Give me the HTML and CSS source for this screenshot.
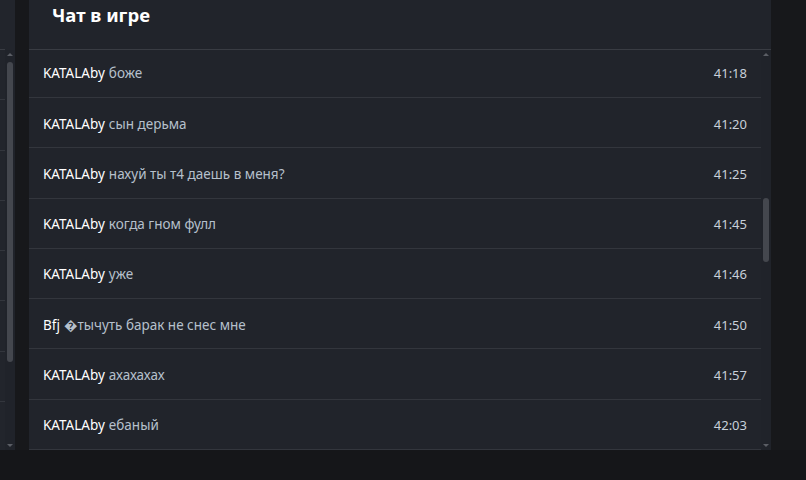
FILE: index.html
```html
<!DOCTYPE html>
<html lang="ru">
<head>
    <meta charset="UTF-8">
    <meta name="viewport" content="width=device-width, initial-scale=1.0">
    <title>Чат в игре</title>
    <link rel="stylesheet" href="styles.css">
</head>
<body>
    <div id="stage">
        <div id="side-panel">
            <div class="side-list">
                <div class="side-head"></div>
                <div class="side-row"></div>
                <div class="side-row"></div>
                <div class="side-row"></div>
                <div class="side-row"></div>
                <div class="side-row"></div>
                <div class="side-row"></div>
                <div class="side-row"></div>
                <div class="side-row"></div>
            </div>
            <div class="scrollbar side-scroll">
                <span class="arrow up"></span>
                <span class="thumb"></span>
                <span class="arrow down"></span>
            </div>
        </div>

        <div id="chat-modal">
            <div id="chat-header">
                <h2>Чат в игре</h2>
            </div>
            <div id="chat-body">
                <div id="chat-list">
                    <div class="msg"><span class="who">KATALAby</span><span class="text">боже</span><span class="time">41:18</span></div>
                    <div class="msg"><span class="who">KATALAby</span><span class="text">сын дерьма</span><span class="time">41:20</span></div>
                    <div class="msg"><span class="who">KATALAby</span><span class="text">нахуй ты т4 даешь в меня?</span><span class="time">41:25</span></div>
                    <div class="msg"><span class="who">KATALAby</span><span class="text">когда гном фулл</span><span class="time">41:45</span></div>
                    <div class="msg"><span class="who">KATALAby</span><span class="text">уже</span><span class="time">41:46</span></div>
                    <div class="msg"><span class="who">Bfj</span><span class="text">&#xFFFD;тычуть барак не снес мне</span><span class="time">41:50</span></div>
                    <div class="msg"><span class="who">KATALAby</span><span class="text">ахахахах</span><span class="time">41:57</span></div>
                    <div class="msg"><span class="who">KATALAby</span><span class="text">ебаный</span><span class="time">42:03</span></div>
                </div>
                <div class="scrollbar chat-scroll">
                    <span class="arrow up"></span>
                    <span class="thumb"></span>
                    <span class="arrow down"></span>
                </div>
            </div>
        </div>
    </div>
</body>
</html>
```
FILE: styles.css
```css
body {
    margin: 0;
    width: 806px;
    height: 480px;
    overflow: hidden;
    background: #151619;
    font-family: "Noto Sans", "Open Sans", Arial, sans-serif;
    color: #fff;
}

#stage {
    display: flex;
    height: 450px;
    gap: 14px;
    background: #17181b;
}

/* panel peeking out on the left */
#side-panel {
    display: flex;
    width: 15px;
    background: #22252c;
}

.side-list {
    width: 5px;
    overflow: hidden;
}

.side-head {
    height: 49px;
    border-bottom: 1px solid #393c43;
    width: 15px;
}

.side-row {
    height: 49.25px;
    border-bottom: 1px solid #33363d;
}

.side-row:first-of-type {
    height: 50px;
}

.side-scroll {
    width: 10px;
    margin-top: 50px;
}

/* chat modal */
#chat-modal {
    width: 742px;
    display: flex;
    flex-direction: column;
    background: #21242b;
}

#chat-header {
    height: 49px;
    border-bottom: 1px solid #393c43;
    padding-left: 23px;
}

#chat-header h2 {
    margin: 0;
    padding-top: 2px;
    font-size: 18.5px;
    font-weight: 700;
    line-height: 26px;
    color: #fff;
}

#chat-body {
    display: flex;
    flex: 1;
    overflow: hidden;
}

#chat-list {
    flex: 1;
    overflow: hidden;
}

.msg {
    display: flex;
    align-items: center;
    box-sizing: border-box;
    height: 50.25px;
    padding: 2px 14px 0;
    border-bottom: 1px solid #33363d;
    font-size: 13.5px;
}

.msg:first-child {
    margin-top: -2.25px;
}

.who {
    color: #fff;
    margin-right: 4px;
}

.text {
    flex: 1;
    color: #b6c0cc;
}

.time {
    color: #c8d0da;
    font-size: 13px;
}

/* scrollbars */
.scrollbar {
    position: relative;
    background: #20232a;
}

.chat-scroll {
    width: 10px;
}

.arrow {
    position: absolute;
    left: 2px;
    width: 0;
    height: 0;
    border-left: 3px solid transparent;
    border-right: 3px solid transparent;
}

.arrow.up {
    top: 3px;
    border-bottom: 3px solid #5b5e65;
}

.arrow.down {
    bottom: 3px;
    border-top: 3px solid #5b5e65;
}

.thumb {
    position: absolute;
    left: 2px;
    width: 6px;
    border-radius: 3px;
    background: #44474e;
}

.chat-scroll .thumb {
    top: 148px;
    height: 64px;
}

.side-scroll .thumb {
    top: 12px;
    height: 300px;
}
```
